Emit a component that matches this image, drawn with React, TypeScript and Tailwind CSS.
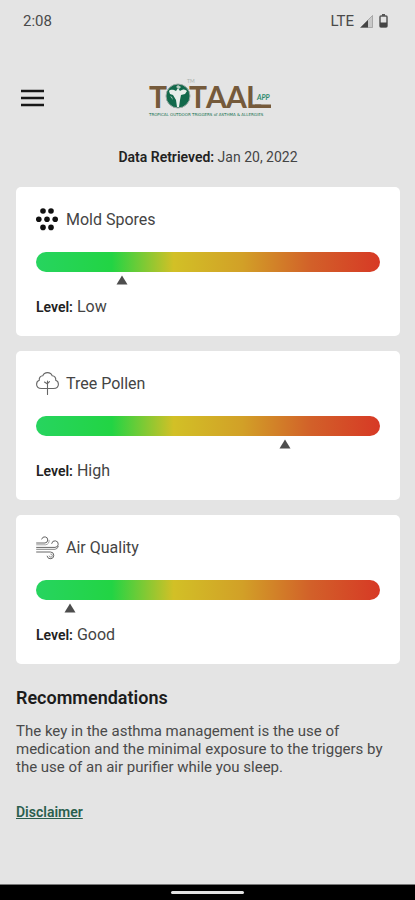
import type { ReactNode } from "react";

type Reading = {
  name: string;
  level: string;
  position: number;
  icon: ReactNode;
};

function SporesIcon() {
  return (
    <svg viewBox="0 0 24 24" className="size-6" fill="#111" aria-hidden="true">
      <circle cx="7" cy="3" r="2.8" />
      <circle cx="15" cy="3" r="2.8" />
      <circle cx="2.8" cy="11.2" r="2.8" />
      <circle cx="11" cy="11.2" r="2.8" />
      <circle cx="19.2" cy="11.2" r="2.8" />
      <circle cx="7" cy="19.4" r="2.8" />
      <circle cx="15" cy="19.4" r="2.8" />
    </svg>
  );
}

function TreeIcon() {
  return (
    <svg viewBox="0 0 24 24" className="size-6" fill="none" stroke="#666" strokeWidth="1.1" strokeLinecap="round" strokeLinejoin="round" aria-hidden="true">
      <path d="M11.5 16.5H5.5C2.6 16.5.6 14.8.6 12.3c0-2.100 1.100-3.500 2.700-4C2.900 5.800 4.400 4 6.800 3.800 7.500 1.700 9.200.6 11.500.6s4 1.100 4.700 3.200c2.400.2 3.900 2 3.500 4.500 1.600.5 2.700 1.900 2.700 4 0 2.500-2 4.200-4.900 4.200h-6" />
      <path d="M11.5 9v13.5M11.5 12 8.5 10M11.5 11.5l2-1.800" />
    </svg>
  );
}

function WindIcon() {
  return (
    <svg viewBox="0 0 24 24" className="size-6" fill="none" stroke="#666" strokeWidth="1" strokeLinecap="round" aria-hidden="true">
      <path d="M.6 7h8.400a3.100 3.100 0 1 0-3.300-4" />
      <path d="M.6 8.800h9a4.200 4.200 0 0 0 3.500-4.500" strokeWidth=".6" />
      <path d="M.6 11.400h18.400a3.300 3.300 0 1 0-3.300-4" />
      <path d="M.6 13.300h18.500a4 4 0 0 0 3.300-3" strokeWidth=".8" />
      <path d="M.6 16h13.900a3.400 3.400 0 1 1-3.400 4.200" />
      <path d="M14.800 18a1.600 1.600 0 1 1-1.600 2" strokeWidth=".7" />
    </svg>
  );
}

const readings: Reading[] = [
  { name: "Mold Spores", level: "Low", position: 25, icon: <SporesIcon /> },
  { name: "Tree Pollen", level: "High", position: 72.5, icon: <TreeIcon /> },
  { name: "Air Quality", level: "Good", position: 9.9, icon: <WindIcon /> },
];

function Logo() {
  return (
    <svg viewBox="0 0 124 40" className="h-10 w-[124px] overflow-visible" role="img" aria-label="TOTAAL App">
      <g fill="#755a3b" fontFamily="Lato, sans-serif" fontSize="30" fontWeight="700">
        <text x="0" y="30">T</text>
        <text x="40" y="30">T</text>
        <text x="57" y="30">A</text>
        <text x="77" y="30">A</text>
        <text x="97" y="30">L</text>
      </g>
      <path d="M106 26.500h16v3.500h-16z" fill="#755a3b" />
      <circle cx="29" cy="18" r="12" fill="#12694b" stroke="#9aa8a2" strokeWidth="1" />
      <path d="M20 13c2-2 5-1 7 0l2-3 2 3c3-2 5-2 7 0l-2 3-4 1-1 5-1 7h-2l-1-7-3-5-3-1z" fill="#e8eeea" />
      <path d="M27 9l2-2 3 2-2 2zM21 18l2 1 1 3" fill="#b9cdc2" />
      <text x="38" y="5" fill="#a9b0ac" fontFamily="Lato, sans-serif" fontSize="5">TM</text>
      <text x="108" y="22" fill="#2c8a6c" fontFamily="Lato, sans-serif" fontSize="7" fontWeight="700" fontStyle="italic">APP</text>
      <text x="0" y="38" fill="#14704f" fontFamily="DejaVu Sans, sans-serif" fontSize="4">TROPICAL OUTDOOR TRIGGERS of ASTHMA &amp; ALLERGIES</text>
    </svg>
  );
}

function StatusBar() {
  return (
    <div className="flex h-[42px] items-center justify-between pr-[27px] pl-[23px] text-[15px] text-[#4a4a4a]">
      <span>2:08</span>
      <div className="flex items-center gap-[6px]">
        <span>LTE</span>
        <svg viewBox="0 0 13 13" className="size-[13px]" aria-hidden="true">
          <path d="M12.5.5v12H.5z" fill="#c9c9c9" stroke="#888" strokeWidth=".6" />
          <path d="M8 5v7.5H.5z" fill="#444" />
        </svg>
        <svg viewBox="0 0 9 14" className="h-[14px] w-[9px]" aria-hidden="true">
          <path d="M3 0h3v2H3z" fill="#555" />
          <rect x="1" y="2" width="7" height="11" rx="1" fill="none" stroke="#555" strokeWidth="1.5" />
          <path d="M1 8.5h7V13H1z" fill="#444" />
        </svg>
      </div>
    </div>
  );
}

function ReadingCard({ name, level, position, icon }: Reading) {
  return (
    <section className="rounded-[5px] bg-white px-5 pt-[21px] pb-[19px]">
      <h2 className="flex h-6 items-center gap-[6px] text-base text-[#444]">
        {icon}
        {name}
      </h2>
      <div className="mt-5 h-5 rounded-full bg-[linear-gradient(90deg,#27d45f_0%,#22d444_22%,#d2c026_40%,#d2a027_60%,#d26029_80%,#d73925_100%)]" />
      <div className="mt-[3px] h-[10px]">
        <svg
          viewBox="0 0 12 10"
          className="h-[10px] w-3 -translate-x-1/2"
          style={{ marginLeft: `${position}%` }}
          aria-hidden="true"
        >
          <path d="M6 .5 11.5 9.5H.5z" fill="#4d4d4d" />
        </svg>
      </div>
      <p className="mt-3 text-base leading-5 text-[#444]">
        <span className="text-sm font-semibold text-[#222]">Level:</span> {level}
      </p>
    </section>
  );
}

export default function App() {
  return (
    <div className="flex min-h-screen flex-col bg-[#e4e4e4] font-[Roboto,sans-serif]">
      <StatusBar />
      <header className="mt-9 grid grid-cols-[1fr_auto_1fr] items-center pr-[14px] pl-5">
        <button type="button" aria-label="Menu" className="w-6">
          <svg viewBox="0 0 24 18" className="h-[18px] w-6" aria-hidden="true">
            <path d="M1 2h23M1 9h23M1 16h23" stroke="#181818" strokeWidth="2.6" />
          </svg>
        </button>
        <Logo />
      </header>
      <main className="flex-1 pt-[29px] pr-[15px] pl-4">
        <p className="text-center text-sm leading-5 text-[#444]">
          <span className="font-semibold text-[#222]">Data Retrieved:</span> Jan 20, 2022
        </p>
        <div className="mt-5 flex flex-col gap-[15px]">
          {readings.map((reading) => (
            <ReadingCard key={reading.name} {...reading} />
          ))}
        </div>
        <h2 className="mt-[22px] text-lg leading-6 font-semibold text-[#1c1c1c]">Recommendations</h2>
        <p className="mt-3 text-[15px] leading-[18px] text-[#4a4a4a]">
          The key in the asthma management is the use of medication and the minimal exposure to the triggers by the use of an air purifier while you sleep.
        </p>
        <a href="#disclaimer" className="mt-[26px] inline-block text-sm leading-5 font-semibold text-[#2b5f4e] underline">
          Disclaimer
        </a>
      </main>
      <footer className="flex h-4 items-center justify-center border-t border-[#777] bg-black">
        <div className="h-[3px] w-[73px] rounded-full bg-[#e2e2e2]" />
      </footer>
    </div>
  );
}
